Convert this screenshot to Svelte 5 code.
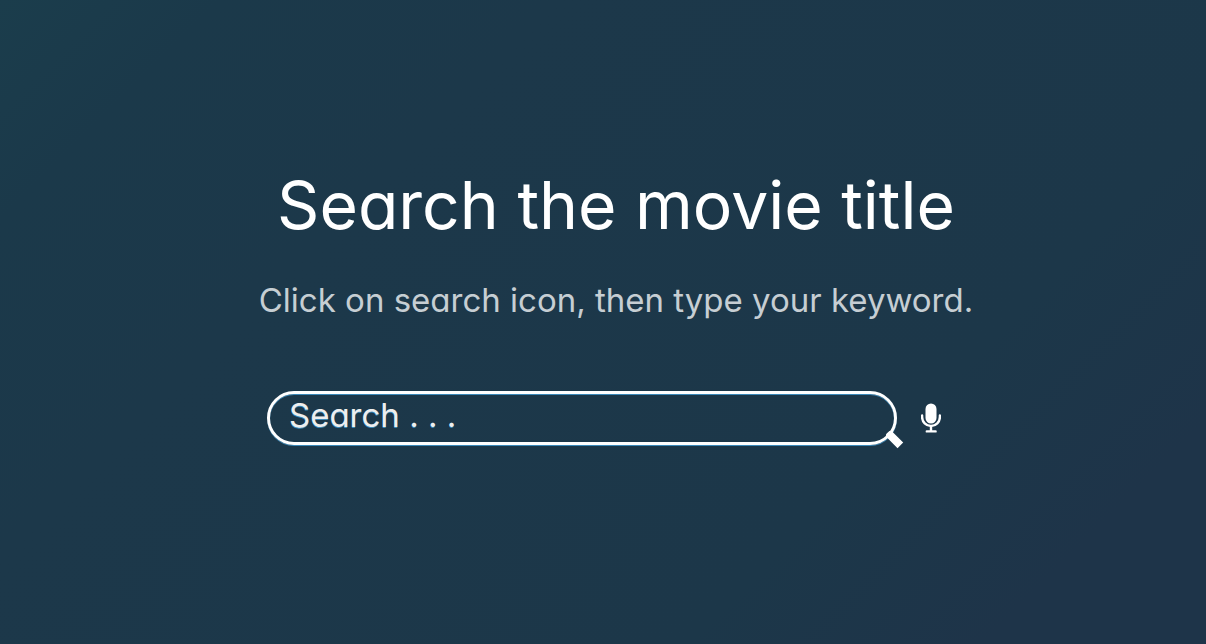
<script>
  let keyword = $state('');
</script>

<svelte:head><title>Movie search</title></svelte:head>

<main>
  <h1>Search the movie title</h1>
  <p>Click on search icon, then type your keyword.</p>
  <form onsubmit={(event) => event.preventDefault()}>
    <div class="field">
      <input type="text" aria-label="Search" placeholder="Search . . ." bind:value={keyword} />
      <button class="handle" type="submit" aria-label="Submit search"></button>
    </div>
    <button class="mic" type="button" aria-label="Voice search">
      <svg viewBox="0 0 20 30" aria-hidden="true">
        <rect x="4.5" y="0.5" width="11" height="20" rx="5.5" fill="#fff" />
        <path d="M1.1 12.5v1.6a8.9 8.9 0 0 0 17.8 0v-1.6M10 23.5v4M5.8 28.4h8.8" fill="none" stroke="#fff" stroke-width="2.4" stroke-linecap="round" />
      </svg>
    </button>
  </form>
</main>

<style>
  :global(body) { margin: 0; }
  main {
    box-sizing: border-box;
    min-height: 100vh;
    padding: 160px 24px 24px 44px;
    display: flex;
    flex-direction: column;
    align-items: center;
    background: linear-gradient(135deg, #1b3d4c 0%, #1b394a 12%, #1c384a 30%, #1c3749 72%, #1e3449 88%, #1e3449 100%);
    color: #fff;
    font-family: Inter, sans-serif;
    font-feature-settings: "cv11" 1;
  }
  h1 {
    margin: 0;
    padding-left: 6px;
    font-size: 66px;
    font-weight: 400;
    line-height: 90px;
    white-space: nowrap;
  }
  p {
    margin: 30px 0 0;
    padding-left: 6px;
    font-size: 33px;
    line-height: 40px;
    color: #c6ced3;
    white-space: nowrap;
  }
  form {
    display: flex;
    align-items: center;
    margin-top: 71px;
    padding-right: 18px;
  }
  .field { position: relative; width: 630px; }
  input {
    display: block;
    box-sizing: border-box;
    width: 100%;
    height: 54px;
    padding: 0 20px 6px 19px;
    border: 3px solid #fff;
    border-radius: 27px;
    outline: none;
    background: transparent;
    box-shadow: 0 1px 0 #3a88b8, inset 0 1px 0 #3a88b8;
    color: #fff;
    font: 400 33px/40px Inter, sans-serif;
    font-feature-settings: "cv11" 1;
    text-shadow: 0 1px 0 #3a88b8;
  }
  input::placeholder { color: #eee; opacity: 1; }
  button { padding: 0; border: 0; background: none; cursor: pointer; }
  .handle {
    position: absolute;
    right: -6px;
    bottom: 2px;
    width: 18px;
    height: 8px;
    background: #fff;
    border-radius: 3px 0 0 3px;
    transform: rotate(45deg);
  }
  .mic { width: 20px; height: 30px; margin-left: 24px; }
  svg { display: block; width: 100%; height: 100%; }
</style>
